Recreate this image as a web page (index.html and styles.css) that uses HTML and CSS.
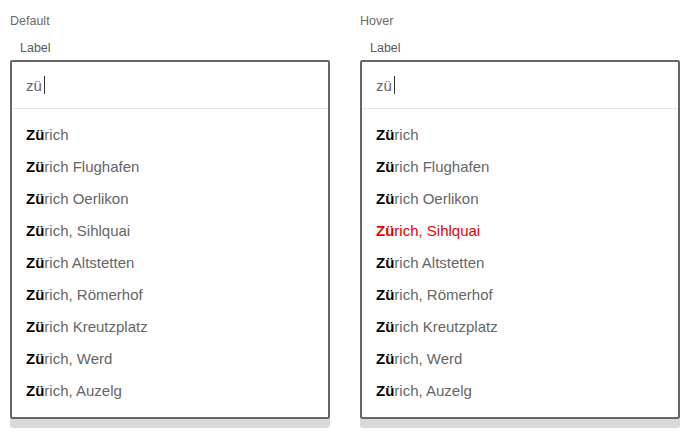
FILE: index.html
```html
<!DOCTYPE html>
<html>
<head>
<meta charset="utf-8">
<link rel="stylesheet" href="styles.css">
</head>
<body>
<div class="page">
  <div class="col">
    <div class="state">Default</div>
    <div class="label">Label</div>
    <div class="box">
      <div class="input"><span class="val">zü</span><span class="caret"></span></div>
      <ul class="list">
        <li><b>Zü</b>rich</li>
        <li><b>Zü</b>rich Flughafen</li>
        <li><b>Zü</b>rich Oerlikon</li>
        <li><b>Zü</b>rich, Sihlquai</li>
        <li><b>Zü</b>rich Altstetten</li>
        <li><b>Zü</b>rich, Römerhof</li>
        <li><b>Zü</b>rich Kreutzplatz</li>
        <li><b>Zü</b>rich, Werd</li>
        <li><b>Zü</b>rich, Auzelg</li>
      </ul>
    </div>
    <div class="shade"></div>
  </div>
  <div class="col">
    <div class="state">Hover</div>
    <div class="label">Label</div>
    <div class="box">
      <div class="input"><span class="val">zü</span><span class="caret"></span></div>
      <ul class="list">
        <li><b>Zü</b>rich</li>
        <li><b>Zü</b>rich Flughafen</li>
        <li><b>Zü</b>rich Oerlikon</li>
        <li class="hover"><b>Zü</b>rich, Sihlquai</li>
        <li><b>Zü</b>rich Altstetten</li>
        <li><b>Zü</b>rich, Römerhof</li>
        <li><b>Zü</b>rich Kreutzplatz</li>
        <li><b>Zü</b>rich, Werd</li>
        <li><b>Zü</b>rich, Auzelg</li>
      </ul>
    </div>
    <div class="shade"></div>
  </div>
</div>
</body>
</html>
```
FILE: styles.css
```css
html, body {
  margin: 0;
  padding: 0;
  background: #fff;
}
body {
  font-family: "Liberation Sans", Arial, sans-serif;
  color: #666;
}
.page {
  display: flex;
  gap: 30px;
  padding: 14px 10px 0 10px;
}
.col {
  width: 320px;
  display: flex;
  flex-direction: column;
}
.state {
  font-size: 12.5px;
  line-height: 14px;
  color: #6a6a6a;
}
.label {
  font-size: 12.5px;
  line-height: 14px;
  margin-top: 13px;
  padding-left: 10px;
  color: #5a5a5a;
}
.box {
  margin-top: 5px;
  border: 2px solid #666;
  border-radius: 2px;
  background: #fff;
}
.input {
  height: 46px;
  border-bottom: 1px solid #e4e4e4;
  display: flex;
  align-items: center;
  padding-left: 14px;
  font-size: 15px;
  color: #666;
}
.caret {
  display: inline-block;
  width: 1px;
  height: 18px;
  background: #333;
  margin-left: 2px;
}
.list {
  list-style: none;
  margin: 0;
  padding: 9px 0 11px 0;
}
.list li {
  height: 32px;
  line-height: 33px;
  padding-left: 14px;
  font-size: 15px;
  color: #666;
}
.list li b {
  color: #000;
  font-weight: bold;
}
.list li.hover,
.list li.hover b {
  color: #e60000;
}
.shade {
  height: 9px;
  background: #d9d9d9;
  border-radius: 0 0 3px 3px;
}
```
